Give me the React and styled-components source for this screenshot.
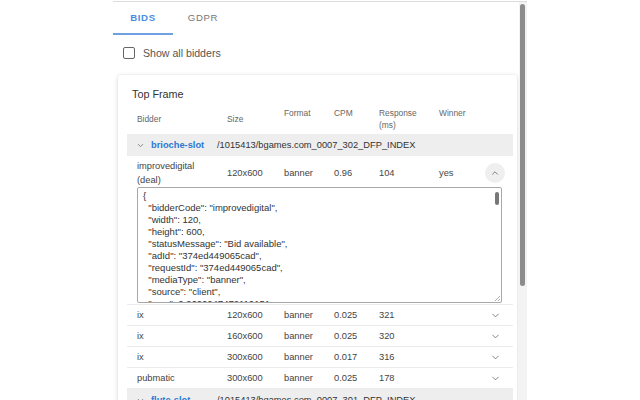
import React from 'react';
import styled, { createGlobalStyle } from 'styled-components';
import { ChevronDown, ChevronUp } from 'lucide-react';

const Global = createGlobalStyle`
  html, body { margin: 0; padding: 0; background: #fff; }
  body { font-family: "Liberation Sans", Arial, sans-serif; color: #444; }
`;

const Page = styled.div`
  width: 640px;
  height: 400px;
  overflow: hidden;
  padding-top: 1px;
  box-sizing: border-box;
`;

const Popup = styled.div`
  margin-left: 113px;
  width: 414px;
  height: 399px;
  border-top: 1px solid #dcdcdc;
  display: flex;
  overflow: hidden;
`;

const Content = styled.div`
  width: 406px;
  flex: none;
`;

const Track = styled.div`
  width: 8px;
  flex: none;
  background: #f3f3f3;
  padding-top: 2px;
  box-sizing: border-box;
`;

const Thumb = styled.div`
  width: 5px;
  height: 282px;
  margin-left: 1px;
  border-radius: 3px;
  background: #8c8c8c;
`;

const Tabs = styled.div`
  display: flex;
  height: 33px;
`;

const Tab = styled.div`
  width: 60px;
  display: flex;
  align-items: center;
  justify-content: center;
  font-size: 9.6px;
  letter-spacing: 0.7px;
  font-weight: ${p => (p.active ? 600 : 400)};
  color: ${p => (p.active ? '#4a8ee3' : '#777')};
  border-bottom: 2px solid ${p => (p.active ? '#6f9fe4' : 'transparent')};
`;

const CheckRow = styled.label`
  display: flex;
  align-items: center;
  gap: 8px;
  height: 35px;
  padding-left: 10px;
  font-size: 10.6px;
  color: #555;
`;

const Box = styled.span`
  width: 10px;
  height: 10px;
  border: 1.5px solid #666;
  border-radius: 2px;
`;

const Card = styled.div`
  margin: 5px 2px 0 5px;
  background: #fff;
  box-shadow: 0 1px 5px rgba(0, 0, 0, 0.16), 0 0 2px rgba(0, 0, 0, 0.06);
  border-radius: 3px;
  padding: 13px 4px 0 9px;
`;

const Title = styled.div`
  font-size: 10.8px;
  color: #333;
  padding-left: 5px;
  height: 16px;
`;

const Row = styled.div`
  display: grid;
  grid-template-columns: 90px 57px 50px 45px 60px 44px 24px;
  padding: ${p => p.pt || 0}px 6px 0 10px;
  align-items: center;
  font-size: 9.3px;
  color: #444;
  min-height: ${p => p.h || 20}px;
  border-bottom: ${p => (p.last ? 'none' : '1px solid #ececec')};
`;

const HeadRow = styled(Row)`
  min-height: 30px;
  font-size: 8.4px;
  color: #666;
  border-bottom: none;
`;

const HeadCell = styled.div`
  align-self: ${p => (p.top ? 'start' : 'center')};
  padding-top: ${p => (p.top ? 3 : 0)}px;
  line-height: 12px;
`;

const Cell = styled.div`
  line-height: 14px;
  white-space: nowrap;
`;

const SlotRow = styled.div`
  display: flex;
  align-items: center;
  height: 22px;
  background: #eeeeee;
  padding-left: 9px;
  font-size: 9.3px;
  color: #333;
`;

const SlotName = styled.span`
  color: #2b77d4;
  font-weight: 700;
  width: 66px;
  margin-left: 6px;
`;

const Toggle = styled.div`
  width: 20px;
  height: 20px;
  border-radius: 50%;
  background: ${p => (p.open ? '#efefef' : 'transparent')};
  display: flex;
  align-items: center;
  justify-content: center;
  justify-self: center;
  color: #6a6a6a;
`;

const JsonWrap = styled.div`
  padding: 0 11px 1px 10px;
  border-bottom: 1px solid #ececec;
`;

const JsonBox = styled.div`
  display: flex;
  width: 365px;
  height: 116px;
  box-sizing: border-box;
  border: 1px solid #a8a8a8;
  border-radius: 2px;
  overflow: hidden;
`;

const JsonText = styled.pre`
  flex: 1;
  margin: 0;
  padding: 2px 5px;
  font-family: "Liberation Sans", Arial, sans-serif;
  font-size: 9.5px;
  line-height: 12px;
  color: #333;
  overflow: hidden;
`;

const JsonScroll = styled.div`
  width: 8px;
  display: flex;
  flex-direction: column;
  justify-content: space-between;
  align-items: center;
  padding: 4px 0 1px;
`;

const JsonThumb = styled.div`
  width: 4px;
  height: 13px;
  border-radius: 2px;
  background: #777;
`;

const bid = {
  bidderCode: 'improvedigital',
  width: 120,
  height: 600,
  statusMessage: 'Bid available',
  adId: '374ed449065cad',
  requestId: '374ed449065cad',
  mediaType: 'banner',
  source: 'client',
  cpm: 0.9600047472110151,
  creativeId: '422297',
  currency: 'USD',
  dealId: 'deal',
  netRevenue: false,
  ttl: 300,
};

const others = [
  ['ix', '120x600', 'banner', '0.025', '321'],
  ['ix', '160x600', 'banner', '0.025', '320'],
  ['ix', '300x600', 'banner', '0.017', '316'],
  ['pubmatic', '300x600', 'banner', '0.025', '178'],
];

export default function App() {
  return (
    <Page>
      <Global />
      <Popup>
        <Content>
          <Tabs>
            <Tab active>BIDS</Tab>
            <Tab>GDPR</Tab>
          </Tabs>
          <CheckRow>
            <Box />
            Show all bidders
          </CheckRow>
          <Card>
            <Title>Top Frame</Title>
            <HeadRow>
              <HeadCell>Bidder</HeadCell>
              <HeadCell>Size</HeadCell>
              <HeadCell top>Format</HeadCell>
              <HeadCell top>CPM</HeadCell>
              <HeadCell top>Response<br />(ms)</HeadCell>
              <HeadCell top>Winner</HeadCell>
              <div />
            </HeadRow>
            <SlotRow>
              <ChevronDown size={9} strokeWidth={2} color="#666" />
              <SlotName>brioche-slot</SlotName>
              /1015413/bgames.com_0007_302_DFP_INDEX
            </SlotRow>
            <Row h={27} pt={3} last>
              <Cell>improvedigital<br />(deal)</Cell>
              <Cell>120x600</Cell>
              <Cell>banner</Cell>
              <Cell>0.96</Cell>
              <Cell>104</Cell>
              <Cell>yes</Cell>
              <Toggle open>
                <ChevronUp size={10} strokeWidth={2} />
              </Toggle>
            </Row>
            <JsonWrap>
              <JsonBox>
                <JsonText>{JSON.stringify(bid, null, 2)}</JsonText>
                <JsonScroll>
                  <JsonThumb />
                  <svg width="6" height="6" viewBox="0 0 6 6">
                    <path d="M1 6 L6 1 M4 6 L6 4" stroke="#999" strokeWidth="0.8" />
                  </svg>
                </JsonScroll>
              </JsonBox>
            </JsonWrap>
            {others.map((r, i) => (
              <Row key={i}>
                <Cell>{r[0]}</Cell>
                <Cell>{r[1]}</Cell>
                <Cell>{r[2]}</Cell>
                <Cell>{r[3]}</Cell>
                <Cell>{r[4]}</Cell>
                <span />
                <Toggle>
                  <ChevronDown size={11} strokeWidth={1.8} />
                </Toggle>
              </Row>
            ))}
            <SlotRow>
              <ChevronDown size={9} strokeWidth={2} color="#666" />
              <SlotName>flute-slot</SlotName>
              /1015413/bgames.com_0007_301_DFP_INDEX
            </SlotRow>
          </Card>
        </Content>
        <Track>
          <Thumb />
        </Track>
      </Popup>
    </Page>
  );
}
